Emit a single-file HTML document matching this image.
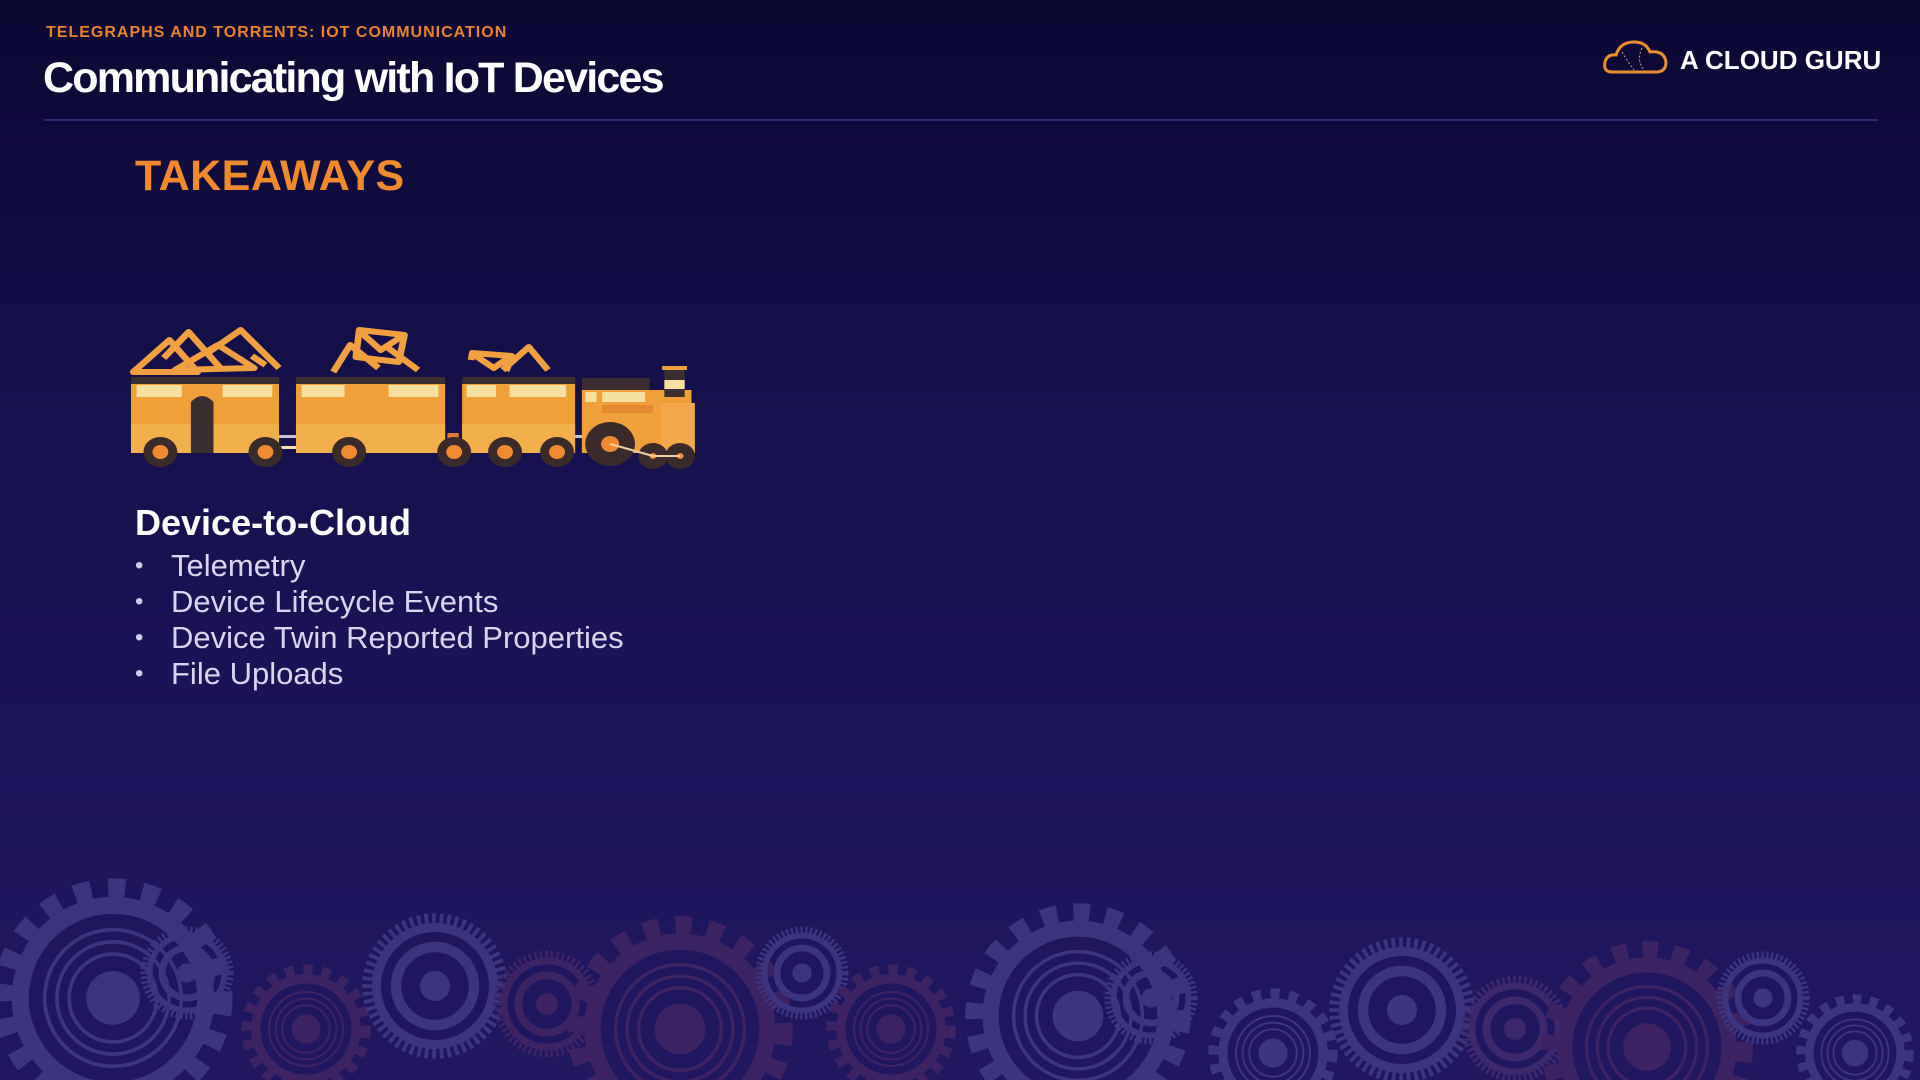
<!DOCTYPE html>
<html><head><meta charset="utf-8"><style>
html,body{margin:0;padding:0}
body{width:1920px;height:1080px;overflow:hidden;position:relative;font-family:"Liberation Sans",sans-serif;
background:linear-gradient(180deg,#0c0833 0%,#140f48 30%,#1c1459 70%,#21175f 100%);}
.sub{position:absolute;left:46px;top:24px;font-size:16px;font-weight:bold;color:#e8822f;letter-spacing:1px}
.title{position:absolute;left:43px;top:54px;font-size:43px;font-weight:bold;color:#fff;letter-spacing:-1.8px}
.line{position:absolute;left:44px;top:119px;width:1834px;height:2px;background:#2f2a6c}
.logo{position:absolute;left:1680px;top:45px;font-size:26px;font-weight:bold;color:#fff}
.take{position:absolute;left:135px;top:152px;font-size:43px;font-weight:bold;color:#f08a2c;letter-spacing:0.5px}
.h{position:absolute;left:135px;top:502px;font-size:36px;font-weight:bold;color:#fff}
ul{position:absolute;left:135px;top:548px;margin:0;padding:0;list-style:none;color:#d9d5ef;font-size:31px}
li{height:36px;line-height:36px;position:relative;padding-left:36px}
li:before{content:"•";position:absolute;left:0;font-size:24px;color:#cfcbe8}
svg{position:absolute;left:0;top:0}
</style></head><body>
<svg width="1920" height="1080">
<defs>
<g id="gear">
<circle r="90" fill="none" stroke="currentColor" stroke-width="16" stroke-dasharray="14 14"/>
<circle r="76" fill="none" stroke="currentColor" stroke-width="14"/>
<circle r="56" fill="none" stroke="currentColor" stroke-width="3"/>
<circle r="46" fill="none" stroke="currentColor" stroke-width="3"/>
<circle r="36" fill="none" stroke="currentColor" stroke-width="3"/>
<circle r="22" fill="currentColor"/>
</g>
<g id="gearf">
<circle r="90" fill="none" stroke="currentColor" stroke-width="14" stroke-dasharray="5 5"/>
<circle r="78" fill="none" stroke="currentColor" stroke-width="12"/>
<circle r="52" fill="none" stroke="currentColor" stroke-width="14"/>
<circle r="20" fill="currentColor"/>
</g>
</defs>
<g opacity="0.5">
<use href="#gear" transform="translate(113,998) scale(1.22)" style="color:#5a54a0"/>
<use href="#gearf" transform="translate(187,973) scale(0.48)" style="color:#5a54a0"/>
<use href="#gear" transform="translate(306,1029) scale(0.66)" style="color:#5a3066"/>
<use href="#gearf" transform="translate(435,986) scale(0.75)" style="color:#5a54a0"/>
<use href="#gearf" transform="translate(547,1004) scale(0.55)" style="color:#5a3066"/>
<use href="#gear" transform="translate(680,1029) scale(1.15)" style="color:#5a3066"/>
<use href="#gearf" transform="translate(802,973) scale(0.48)" style="color:#5a54a0"/>
<use href="#gear" transform="translate(891,1029) scale(0.66)" style="color:#5a3066"/>
<use href="#gear" transform="translate(1078,1016) scale(1.15)" style="color:#5a54a0"/>
<use href="#gearf" transform="translate(1151,998) scale(0.48)" style="color:#5a54a0"/>
<use href="#gear" transform="translate(1273,1053) scale(0.66)" style="color:#5a54a0"/>
<use href="#gearf" transform="translate(1402,1010) scale(0.75)" style="color:#5a54a0"/>
<use href="#gearf" transform="translate(1515,1029) scale(0.55)" style="color:#583a78"/>
<use href="#gear" transform="translate(1647,1047) scale(1.08)" style="color:#5a3066"/>
<use href="#gearf" transform="translate(1763,998) scale(0.48)" style="color:#5a54a0"/>
<use href="#gear" transform="translate(1855,1053) scale(0.6)" style="color:#5a54a0"/>
</g>
<!-- logo cloud -->
<path d="M1612 72 Q1603 72 1605 62 Q1607 54 1616 55 Q1620 42 1634 42 Q1646 42 1650 52 Q1664 50 1666 62 Q1666 72 1656 72 Z" fill="none" stroke="#e89030" stroke-width="3"/>
<path d="M1622 52 Q1628 62 1634 70 M1642 48 Q1636 60 1644 70" fill="none" stroke="#c9a07a" stroke-width="1" stroke-dasharray="2 2"/>
<!-- train -->
<g transform="translate(131,0) scale(1.13,1) translate(-131,0)">
<g stroke="#f0a040" stroke-width="6" fill="none" stroke-linejoin="round">
<path d="M133 372 L165 340 L190 372 Z M160 358 L182 332 L210 368"/>
<path d="M170 370 L208 345 L240 368 Z M200 352 L228 330 L262 368 M238 356 L250 365"/>
<path d="M310 372 L325 345 L350 368 M333 330 L373 335 L368 362 L330 357 Z M335 333 L352 350 L370 337 M355 345 L385 370"/>
<path d="M432 360 L433 353 L468 356 L463 371 M435 355 L452 368 L466 357 M460 370 L483 347 L500 370"/>
</g>
<g>
<rect x="131" y="377" width="131" height="7" fill="#3a2e30"/>
<rect x="131" y="384" width="131" height="69" fill="#f0a038"/>
<rect x="131" y="424" width="131" height="29" fill="#f2b04a"/>
<rect x="136" y="385" width="40" height="12" fill="#f6e0a0"/>
<rect x="212" y="385" width="44" height="12" fill="#f6e0a0"/>
<path d="M184 453 L184 402 Q194 390 204 402 L204 453 Z" fill="#3a2e30"/>
<rect x="277" y="377" width="132" height="7" fill="#3a2e30"/>
<rect x="277" y="384" width="132" height="69" fill="#f0a038"/>
<rect x="277" y="424" width="132" height="29" fill="#f2b04a"/>
<rect x="282" y="385" width="38" height="12" fill="#f6e0a0"/>
<rect x="359" y="385" width="44" height="12" fill="#f6e0a0"/>
<rect x="424" y="377" width="100" height="7" fill="#3a2e30"/>
<rect x="424" y="384" width="100" height="69" fill="#f0a038"/>
<rect x="424" y="424" width="100" height="29" fill="#f2b04a"/>
<rect x="428" y="385" width="26" height="12" fill="#f6e0a0"/>
<rect x="466" y="385" width="50" height="12" fill="#f6e0a0"/>
<rect x="262" y="435" width="15" height="3" fill="#c8c0d8"/><rect x="262" y="446" width="15" height="3" fill="#f4e0b0"/>
<rect x="409" y="446" width="15" height="3" fill="#f4e0b0"/><rect x="411" y="433" width="10" height="9" fill="#e07a30"/>
<rect x="524" y="435" width="8" height="3" fill="#c8c0d8"/>
<rect x="530" y="378" width="60" height="12" fill="#3a2e30"/>
<rect x="530" y="390" width="97" height="63" fill="#f0a038"/>
<rect x="533" y="392" width="10" height="10" fill="#f6e0a0"/><rect x="548" y="392" width="38" height="10" fill="#f6e0a0"/>
<rect x="548" y="405" width="45" height="8" fill="#e58a30"/>
<rect x="600" y="403" width="30" height="50" fill="#f2a848"/>
<rect x="601" y="366" width="22" height="4" fill="#f0a038"/><rect x="603" y="370" width="18" height="10" fill="#3a2e30"/><rect x="603" y="380" width="18" height="9" fill="#f6e0a0"/><rect x="603" y="389" width="18" height="8" fill="#3a2e30"/>
</g>
<g fill="#3a2a2a">
<circle cx="157" cy="452" r="15"/><circle cx="250" cy="452" r="15"/><circle cx="324" cy="452" r="15"/><circle cx="417" cy="452" r="15"/>
<circle cx="462" cy="452" r="15"/><circle cx="508" cy="452" r="15"/><circle cx="555" cy="444" r="22"/><circle cx="593" cy="456" r="13"/><circle cx="617" cy="456" r="13"/>
</g>
<g fill="#f08a30">
<circle cx="157" cy="452" r="7"/><circle cx="250" cy="452" r="7"/><circle cx="324" cy="452" r="7"/><circle cx="417" cy="452" r="7"/>
<circle cx="462" cy="452" r="7"/><circle cx="508" cy="452" r="7"/><circle cx="555" cy="444" r="8"/><circle cx="593" cy="456" r="3"/><circle cx="617" cy="456" r="3"/>
</g>
<path d="M555 444 L593 456 L617 456" stroke="#f0d0a0" stroke-width="2" fill="none"/>
</g>
</svg>
<div class="sub">TELEGRAPHS AND TORRENTS: IOT COMMUNICATION</div>
<div class="title">Communicating with IoT Devices</div>
<div class="line"></div>
<div class="logo">A CLOUD GURU</div>
<div class="take">TAKEAWAYS</div>
<div class="h">Device-to-Cloud</div>
<ul><li>Telemetry</li><li>Device Lifecycle Events</li><li>Device Twin Reported Properties</li><li>File Uploads</li></ul>
</body></html>
